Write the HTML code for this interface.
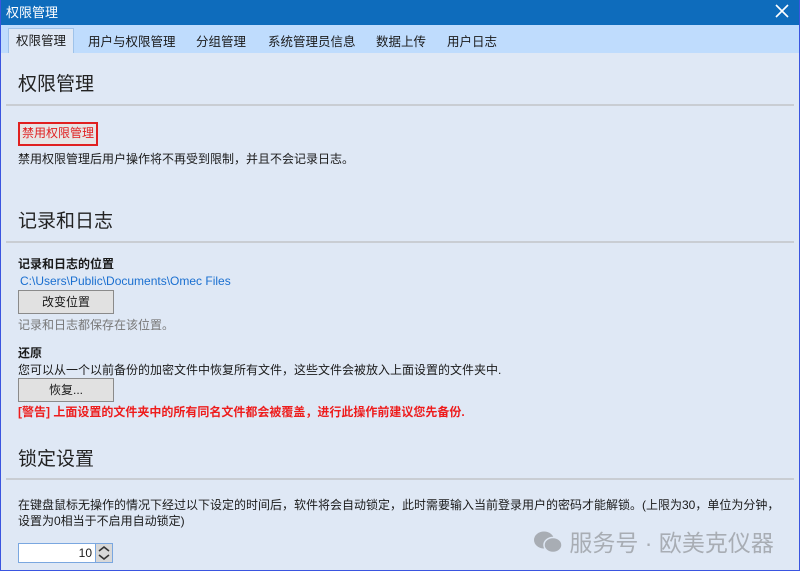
<!DOCTYPE html>
<html><head><meta charset="utf-8"><style>
*{margin:0;padding:0;box-sizing:border-box}
body{width:800px;height:571px;overflow:hidden;background:#dfe8f5;font-family:"Liberation Sans","Noto Sans CJK SC",sans-serif;font-size:12px;color:#1a1a1a;position:relative}
.frame{position:absolute;inset:0;border:1px solid #3a55e0;border-top:none}
.title{position:absolute;left:0;top:0;width:800px;height:25px;background:#0e6cbc;color:#fff;font-size:13px;line-height:25px;padding-left:6px}
.close{position:absolute;right:10px;top:3px;}
.tabs{position:absolute;left:1px;top:25px;width:798px;height:28px;background:#bfdcfd}
.tab{position:absolute;top:6px;font-size:12.5px}
.tab.act{top:3px;left:7px;width:66px;height:25px;background:#dfe8f5;border:1px solid #9fc3ea;border-bottom:none;text-align:center;line-height:24px}
.a{position:absolute;white-space:nowrap}
h2{position:absolute;left:18px;font-weight:normal;font-size:19px;color:#222}
.sep{position:absolute;left:6px;right:6px;height:2px;background:#c9cdd3}
.btn{position:absolute;left:18px;width:96px;height:24px;background:#e1e1e1;border:1px solid #8a8a8a;text-align:center;line-height:22px}
b{font-weight:bold}
</style></head><body>
<div class="title">权限管理<svg class="close" width="16" height="16" viewBox="0 0 16 16"><path d="M2 2L14 14M14 2L2 14" stroke="#fff" stroke-width="1.6"/></svg></div>
<div class="tabs">
<div class="tab act">权限管理</div>
<div class="tab" style="left:87px">用户与权限管理</div>
<div class="tab" style="left:195px">分组管理</div>
<div class="tab" style="left:267px">系统管理员信息</div>
<div class="tab" style="left:375px">数据上传</div>
<div class="tab" style="left:446px">用户日志</div>
</div>
<h2 style="top:69px">权限管理</h2>
<div class="sep" style="top:104px"></div>
<div class="a" style="left:18px;top:122px;width:80px;height:24px;border:2px solid #e02020;color:#e02020;line-height:19px;padding-left:2px;background:#e6e6e6">禁用权限管理</div>
<div class="a" style="left:18px;top:150px">禁用权限管理后用户操作将不再受到限制，并且不会记录日志。</div>
<h2 style="top:206px">记录和日志</h2>
<div class="sep" style="top:241px"></div>
<div class="a" style="left:18px;top:255px"><b>记录和日志的位置</b></div>
<div class="a" style="left:20px;top:274px;color:#1a6fd0">C:\Users\Public\Documents\Omec Files</div>
<div class="btn" style="top:290px">改变位置</div>
<div class="a" style="left:18px;top:316px;color:#777">记录和日志都保存在该位置。</div>
<div class="a" style="left:18px;top:344px"><b>还原</b></div>
<div class="a" style="left:18px;top:361px">您可以从一个以前备份的加密文件中恢复所有文件，这些文件会被放入上面设置的文件夹中.</div>
<div class="btn" style="top:378px">恢复...</div>
<div class="a" style="left:18px;top:403px;color:#ee1c1c"><b>[警告] 上面设置的文件夹中的所有同名文件都会被覆盖，进行此操作前建议您先备份.</b></div>
<h2 style="top:444px">锁定设置</h2>
<div class="sep" style="top:478px"></div>
<div class="a" style="left:18px;top:496px">在键盘鼠标无操作的情况下经过以下设定的时间后，软件将会自动锁定，此时需要输入当前登录用户的密码才能解锁。(上限为30，单位为分钟，</div>
<div class="a" style="left:18px;top:512px">设置为0相当于不启用自动锁定)</div>
<div class="a" style="left:18px;top:543px;width:78px;height:20px;background:#fff;border:1px solid #7aa7e0;text-align:right;padding-right:3px;line-height:18px">10</div>
<div class="a" style="left:95px;top:543px;width:18px;height:20px;background:#d8d8d8;border:1px solid #7aa7e0">
<svg width="16" height="18" viewBox="0 0 16 18"><path d="M3 7L8 3L13 7M3 11L8 15L13 11" stroke="#333" stroke-width="1.6" fill="none"/></svg></div>
<div class="a" style="left:533px;top:524px;font-size:23px;color:#a8adb4">
<svg width="30" height="24" viewBox="0 0 30 24" style="vertical-align:-3px"><ellipse cx="11" cy="10" rx="10" ry="8.5" fill="#a8adb4"/><ellipse cx="20" cy="15" rx="9" ry="7.5" fill="#a8adb4" stroke="#dfe8f5" stroke-width="1.5"/></svg> 服务号 · 欧美克仪器</div>
<div class="frame"></div>
</body></html>
